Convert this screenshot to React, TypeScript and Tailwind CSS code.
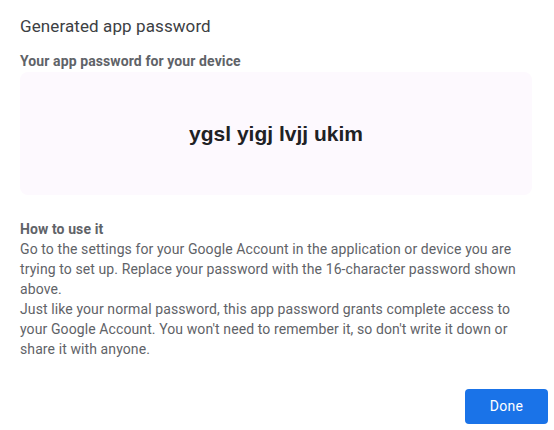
import React from 'react';

const App: React.FC = () => {
  return (
    <div className="w-[554px] h-[430px] bg-white flex flex-col px-5 font-['Roboto',sans-serif]">
      <h1 className="pt-[14px] text-[17px] leading-[24px] text-[#3c4043] tracking-[0.1px]">
        Generated app password
      </h1>

      <div className="mt-[13px] text-[14px] leading-[20px] font-bold text-[#5f6368] tracking-[0.1px]">
        Your app password for your device
      </div>

      <div className="mt-[1px] h-[123px] w-[512px] rounded-lg bg-[#fdf9fe] flex items-center justify-center">
        <span className="font-['Liberation_Sans',Arial,sans-serif] font-bold text-[21px] text-[#202124]">
          ygsl yigj lvjj ukim
        </span>
      </div>

      <div className="mt-[24px] text-[14px] leading-[20px] text-[#5f6368] tracking-[0.1px]">
        <div className="font-bold">How to use it</div>
        <div>
          Go to the settings for your Google Account in the application or device you are trying to set up. Replace your password with the 16-character password shown above.
        </div>
        <div>
          Just like your normal password, this app password grants complete access to your Google Account. You won't need to remember it, so don't write it down or share it with anyone.
        </div>
      </div>

      <div className="mt-auto mb-[6px] -mr-[14px] flex justify-end">
        <button className="w-[83px] h-[35px] rounded bg-[#1a73e8] text-white text-[14px] font-normal tracking-[0.25px]">
          Done
        </button>
      </div>
    </div>
  );
};

export default App;
